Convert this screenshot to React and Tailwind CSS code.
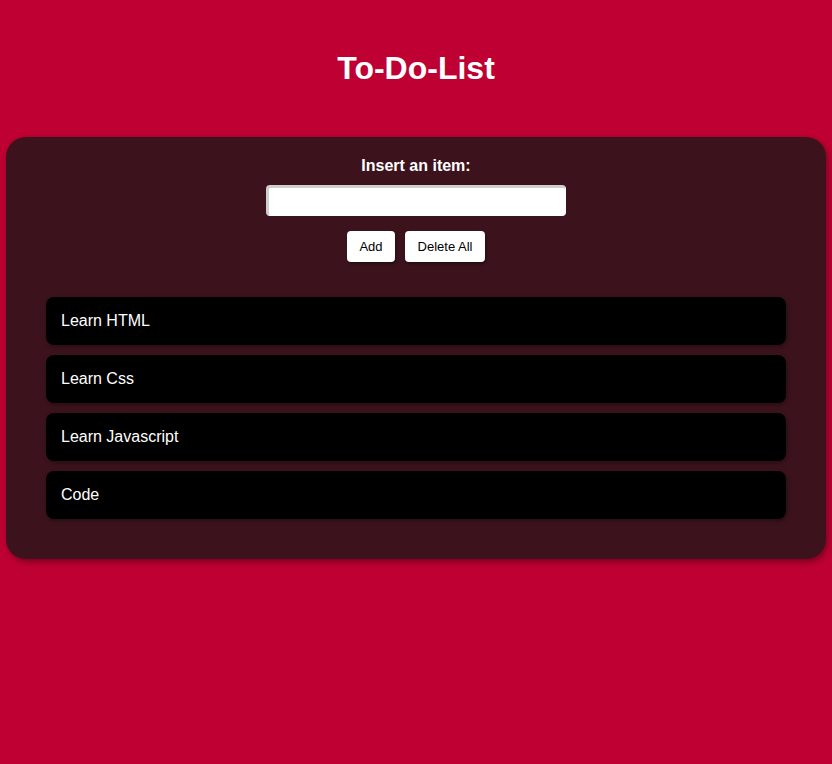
import React, { useState } from 'react';

const App = () => {
    const [items, setItems] = useState(['Learn HTML', 'Learn Css', 'Learn Javascript', 'Code']);
    const [text, setText] = useState('');

    const addItem = () => {
        if (!text.trim()) return;
        setItems([...items, text]);
        setText('');
    };

    return (
        <div className="min-h-[764px] bg-[#be0032] px-[6px] pt-[50px] font-['Liberation_Sans',Arial,sans-serif]">
            <h1 className="text-center text-[32px] leading-[37px] font-bold text-white">
                To-Do-List
            </h1>

            <div className="mt-[50px] rounded-[20px] bg-[#3c131d] px-[40px] pt-[20px] pb-[40px] shadow-[2px_3px_6px_rgba(0,0,0,0.35)]">
                <div className="flex flex-col items-center">
                    <label className="text-[16px] leading-[18px] font-bold text-white">Insert an item:</label>
                    <input
                        type="text"
                        value={text}
                        onChange={(e) => setText(e.target.value)}
                        className="mt-[10px] h-[31px] w-[300px] rounded-[4px] border-t-[3px] border-l-[3px] border-r border-b border-t-[#cfcfcf] border-l-[#cfcfcf] border-r-white border-b-white bg-white px-2 text-[14px] outline-none"
                    />
                    <div className="mt-[15px] flex gap-[10px]">
                        <button
                            onClick={addItem}
                            className="h-[31px] w-[48px] rounded-[4px] bg-white text-[13px] text-black shadow-[1px_2px_3px_rgba(0,0,0,0.4)]"
                        >
                            Add
                        </button>
                        <button
                            onClick={() => setItems([])}
                            className="h-[31px] w-[80px] rounded-[4px] bg-white text-[13px] text-black shadow-[1px_2px_3px_rgba(0,0,0,0.4)]"
                        >
                            Delete All
                        </button>
                    </div>
                </div>

                <ul className="mt-[35px] flex flex-col gap-[10px]">
                    {items.map((item, i) => (
                        <li
                            key={i}
                            className="flex h-[48px] items-center rounded-[8px] bg-black pl-[15px] text-[16px] text-white shadow-[1px_2px_4px_rgba(0,0,0,0.35)]"
                        >
                            {item}
                        </li>
                    ))}
                </ul>
            </div>
        </div>
    );
};

export default App;
